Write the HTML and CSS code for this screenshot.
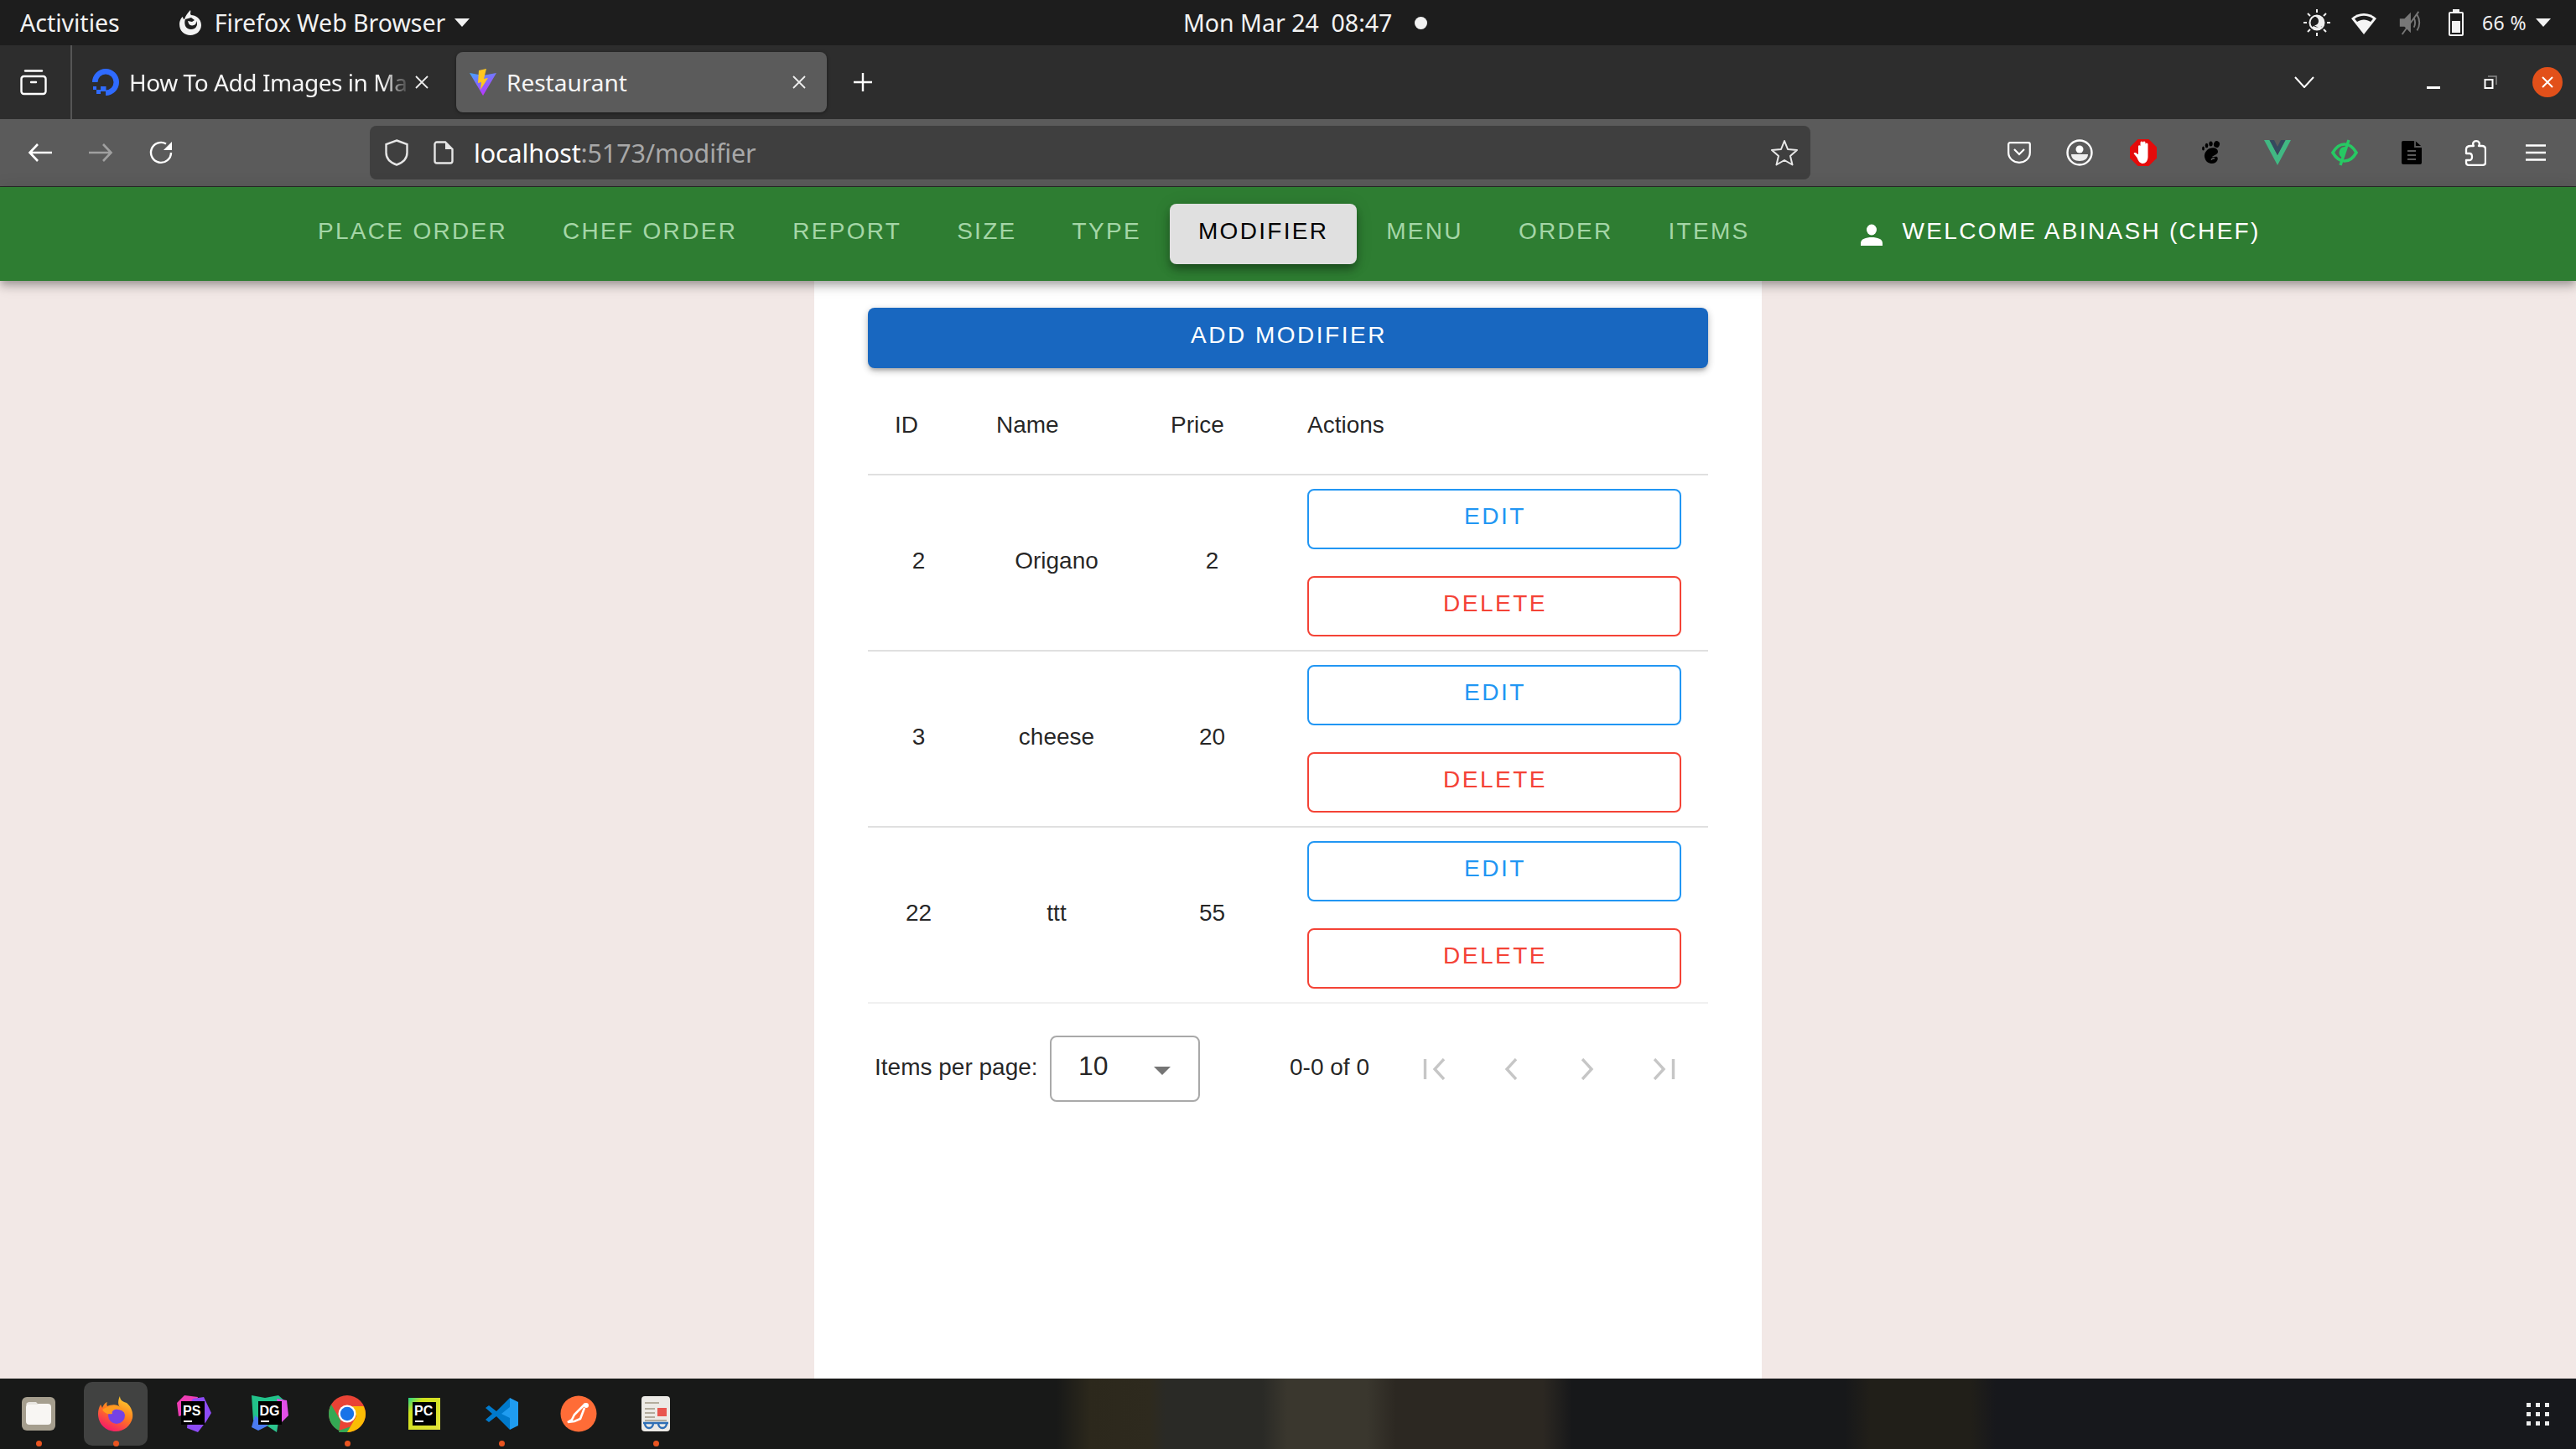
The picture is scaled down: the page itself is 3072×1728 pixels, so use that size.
FILE: index.html
```html
<!DOCTYPE html>
<html lang="en">
<head>
<meta charset="utf-8">
<title>Restaurant</title>
<link rel="stylesheet" href="styles.css">
</head>
<body>
<div class="desktop">
  <header class="topbar">
    <div class="top-left">
      <span class="activities">Activities</span>
      <span class="appmenu">
        <svg class="ff-mono" viewBox="0 0 30 32"><path fill="#f2f2f2" d="M15 1c1 3-1 4 1 6 5 0 12 4 12 12 0 7-6 12-13 12S2 26 2 18c0-4 2-8 4-9 0 2 1 3 2 3 1-4 4-8 7-11z"/><path fill="#1d1d1d" d="M9 12l7-2 4 3-3 2-5-1 1 3c1 3 6 3 8 1 1-1 1-3 1-4 2 3 1 7-2 9-4 2-9 1-11-3-1-3-1-6 0-8z"/></svg>
        <span class="appname">Firefox Web Browser</span>
        <span class="caret"></span>
      </span>
    </div>
    <div class="clock"><span>Mon Mar 24&nbsp; 08:47</span><span class="clock-dot"></span></div>
    <div class="tray">
      <svg class="tray-sun" viewBox="0 0 32 32"><g stroke="#eee" stroke-width="2" fill="none"><path d="M16 0v4M16 28v4M0 16h4M28 16h4M5 5l3 3M24 24l3 3M5 27l3-3M24 8l3-3"/><circle cx="16" cy="16" r="8.5"/></g><path fill="#eee" d="M12 8a9 9 0 0 1 12 11c-3 3-8 3-11 0 3 0 5-2 5-5s-2-5-6-6z"/><path fill="#eee" d="M10 22a9 9 0 0 0 12 0l-2-2a7 7 0 0 1-8 0z"/></svg>
      <svg class="tray-wifi" viewBox="0 0 32 32"><path fill="#f4f4f4" d="M16 30 1 11C9 3 23 3 31 11z"/><path fill="#1d1d1d" d="M5 11.500c6-5 16-5 22 0l-3 3.500c-5-3.500-11-3.500-16 0z"/></svg>
      <svg class="tray-vol" viewBox="0 0 32 32"><path fill="#777" d="M3 11h6l8-8v26l-8-8H3z"/><path fill="none" stroke="#777" stroke-width="2" d="M21 10c2 4 2 8 0 12M25 6c4 6 4 14 0 20M27 2 6 31"/></svg>
      <svg class="tray-bat" viewBox="0 0 20 32"><path fill="none" stroke="#f2f2f2" stroke-width="2" d="M3 4h14a1 1 0 0 1 1 1v25a1 1 0 0 1-1 1H3a1 1 0 0 1-1-1V5a1 1 0 0 1 1-1z"/><path fill="#f2f2f2" d="M6 0h8v4H6zM5 14h10v14H5z"/></svg>
      <span class="bat-text">66 %</span>
      <span class="caret"></span>
    </div>
  </header>

  <div class="tabbar">
    <div class="tab-lead">
      <svg class="ic-tabs" viewBox="0 0 32 32"><g fill="none" stroke="#fff" stroke-width="2.400" stroke-linecap="round"><rect x="1.500" y="9" width="29" height="21" rx="3"/><path d="M6 2.500h20"/><path d="M13 16h6"/></g></svg>
    </div>
    <div class="tab">
      <svg class="favicon" viewBox="0 0 32 32"><path fill="#2f6bff" d="M16 32v-6.500a9.500 9.500 0 1 0-9.500-9.500H0a16 16 0 1 1 16 16z"/><path fill="#2f6bff" d="M10 21h6.500v6H10zM5 25h5v5H5zM1 21h4v4H1z"/></svg>
      <span class="tab-title tab-fade">How To Add Images in Ma</span>
      <svg class="tab-close" viewBox="0 0 16 16"><path stroke="#eee" stroke-width="1.800" d="M1 1l14 14M15 1 1 15"/></svg>
    </div>
    <div class="tab tab-active">
      <svg class="favicon" viewBox="0 0 32 32"><defs><linearGradient id="vp" x1="0" y1="0" x2="0.500" y2="1"><stop offset="0" stop-color="#41a6ff"/><stop offset="1" stop-color="#bd34fe"/></linearGradient></defs><path fill="url(#vp)" d="M0 5l16 3 16-3-16 27z"/><path fill="#ffc61f" d="M20 0 11 2 10 17l4-1-1 9 9-14-5 1z"/></svg>
      <span class="tab-title">Restaurant</span>
      <svg class="tab-close" viewBox="0 0 16 16"><path stroke="#eee" stroke-width="1.800" d="M1 1l14 14M15 1 1 15"/></svg>
    </div>
    <span class="newtab"><svg class="ic-plus" viewBox="0 0 24 24"><path stroke="#fff" stroke-width="2.400" d="M12 1v22M1 12h22"/></svg></span>
    <span class="tabbar-space"></span>
    <svg class="ic-chev" viewBox="0 0 24 14"><path fill="none" stroke="#fff" stroke-width="2" d="M1 1l11 12L23 1"/></svg>
    <span class="win-min"></span>
    <svg class="win-restore" viewBox="0 0 16 16"><path fill="none" stroke="#8a8a8a" stroke-width="1.500" d="M5 1h10v10"/><rect x="1.500" y="5" width="9" height="10" fill="#2d2d2d" stroke="#fff" stroke-width="2"/></svg>
    <span class="win-close"><svg class="win-x" viewBox="0 0 14 14"><path stroke="#fff" stroke-width="2" d="M1 1l12 12M13 1 1 13"/></svg></span>
  </div>

  <div class="toolbar">
    <span class="slot"><svg class="ic-22" viewBox="0 0 30 24"><path fill="none" stroke="#fff" stroke-width="2.600" d="M29 12H3M12 2 2.500 12 12 22"/></svg></span>
    <span class="slot"><svg class="ic-22" viewBox="0 0 30 24"><path fill="none" stroke="#a0a0a0" stroke-width="2.600" d="M1 12h26M18 2l9.500 10L18 22"/></svg></span>
    <span class="slot"><svg class="ic-28" viewBox="0 0 28 28"><path fill="none" stroke="#fff" stroke-width="2.400" d="M26 14A12 12 0 1 1 20 3.500"/><path fill="#fff" d="M27 1v10H17z"/></svg></span>
    <div class="urlbar">
      <svg class="ic-shield" viewBox="0 0 28 32"><path fill="none" stroke="#e6e6e6" stroke-width="2.400" d="M14 1.500 26.500 6v10c0 7-5 12-12.500 14.500C6.500 28 1.500 23 1.500 16V6z"/></svg>
      <svg class="ic-page" viewBox="0 0 24 28"><path fill="none" stroke="#e6e6e6" stroke-width="2.400" d="M4 1.500h10l8.500 8.500v14a2.500 2.500 0 0 1-2.500 2.500H4A2.500 2.500 0 0 1 1.500 24V4A2.500 2.500 0 0 1 4 1.500z"/><path fill="#e6e6e6" d="M14 1.500l8.500 8.500H14z"/></svg>
      <span class="url"><span class="url-host">localhost</span><span class="url-rest">:5173/modifier</span></span>
      <svg class="ic-star" viewBox="0 0 32 32"><path fill="none" stroke="#e8e8e8" stroke-width="2" stroke-linejoin="round" d="M16 2l4 10 11 1-8 7 2.500 10.500L16 25 6.500 30.500 9 20l-8-7 11-1z"/></svg>
    </div>
    <div class="exts">
      <span class="slot"><svg class="ic-pocket" viewBox="0 0 28 26"><path fill="none" stroke="#fff" stroke-width="2.200" d="M3 1.200h22A1.800 1.800 0 0 1 26.800 3v10c0 7-6 11.800-12.800 11.800S1.200 20 1.200 13V3A1.800 1.800 0 0 1 3 1.200z"/><path fill="none" stroke="#fff" stroke-width="2.200" d="M8 9l6 6 6-6"/></svg></span>
      <span class="slot"><svg class="ic-square" viewBox="0 0 32 32"><circle cx="16" cy="16" r="14.500" fill="none" stroke="#fff" stroke-width="2.400"/><circle cx="16" cy="12" r="4.500" fill="#fff"/><path fill="#fff" d="M6 18h20c0 5-4 8-10 8S6 23 6 18z" opacity=".9"/></svg></span>
      <span class="slot slot-w"><svg class="ic-square" viewBox="0 0 32 32"><path fill="#e40b0b" d="M9.500 0h13L32 9.500v13L22.500 32h-13L0 22.500v-13z"/><path fill="#fff" d="M10 18V8a1.500 1.500 0 0 1 2.500 0V4a1.500 1.500 0 0 1 3 0 1.500 1.500 0 0 1 3 0V6a1.500 1.500 0 0 1 3 0v15c0 5-3 8-6 8s-5-2-7-7l-4-5c1-2 3-1 5 1z"/></svg></span>
      <span class="slot slot-w"><svg class="ic-gnome" viewBox="0 0 24 28"><g fill="#000"><ellipse cx="19.500" cy="4" rx="3.500" ry="4" transform="rotate(15 19.500 4)"/><ellipse cx="12.500" cy="3.500" rx="2.200" ry="3"/><ellipse cx="7.500" cy="5.500" rx="1.800" ry="2.800"/><ellipse cx="3.500" cy="9" rx="1.400" ry="2.500"/><path d="M11 9c5-2 10 0 10 4 0 3-5 4-7 6 2 1 4-1 6 0 2 2 0 8-6 8-4 0-8-2-9-8-.6-4 2-8 6-10z"/></g><path fill="none" stroke="#5b5b5b" stroke-width="1.600" d="M17 21c-2-.500-4 .500-3.500 2"/></svg></span>
      <span class="slot slot-w"><svg class="ic-vue" viewBox="0 2 32 30"><path fill="#41b883" d="M0 2h6.500L16 20 25.500 2H32L16 32z"/><path fill="#35495e" d="M6.500 2H12l4 8 4-8h5.500L16 20z"/></svg></span>
      <span class="slot slot-w"><svg class="ic-square" viewBox="0 0 32 32"><path fill="none" stroke="#27c963" stroke-width="3.600" d="M2 16C6 9 10 6 16 6s10 3 14 10c-4 7-8 10-14 10S6 23 2 16z"/><path fill="#27c963" d="M16 9a7 7 0 0 0-3 13l5-13z"/><path stroke="#27c963" stroke-width="3.500" d="M21 1 11 31"/></svg></span>
      <span class="slot slot-w"><svg class="ic-doc" viewBox="0 0 24 28"><path fill="#000" d="M2 0h14l8 7v19a2 2 0 0 1-2 2H2a2 2 0 0 1-2-2V2a2 2 0 0 1 2-2z"/><path stroke="#5b5b5b" stroke-width="1.800" d="M16 0v7h8M7 12h10M7 17h10M7 22h10"/></svg></span>
      <span class="slot"><svg class="ic-puzzle" viewBox="0 0 26 31"><path fill="none" stroke="#fff" stroke-width="2.300" stroke-linejoin="round" d="M8 7h3c-2-3.500 0-5.800 3-5.800s5 2.300 3 5.800h4c3 0 4 1 4 4v16c0 2-1 2.800-3 2.800H5c-2 0-3-.8-3-2.800v-3h4c4 0 4-8 0-8H2v-5c0-3 3-4 6-4z"/></svg></span>
      <span class="slot"><svg class="ic-menu" viewBox="0 0 24 20"><path stroke="#fff" stroke-width="2.500" d="M0 1.500h24M0 10h24M0 18.500h24"/></svg></span>
    </div>
  </div>

  <nav class="appnav">
    <a class="nav-btn">PLACE ORDER</a>
    <a class="nav-btn">CHEF ORDER</a>
    <a class="nav-btn">REPORT</a>
    <a class="nav-btn">SIZE</a>
    <a class="nav-btn">TYPE</a>
    <a class="nav-btn nav-active">MODIFIER</a>
    <a class="nav-btn">MENU</a>
    <a class="nav-btn">ORDER</a>
    <a class="nav-btn">ITEMS</a>
    <div class="welcome">
      <svg class="ic-person" viewBox="0 0 26 26"><ellipse cx="13" cy="7" rx="6" ry="6.500" fill="#fff"/><path fill="#fff" d="M0 26v-3c0-5 6-7 13-7s13 2 13 7v3z"/></svg>
      <span>WELCOME ABINASH (CHEF)</span>
    </div>
  </nav>

  <main class="page">
    <section class="sheet">
      <button class="add-btn">ADD MODIFIER</button>
      <table class="grid">
        <thead>
          <tr>
            <th class="col-id">ID</th>
            <th class="col-name">Name</th>
            <th class="col-price">Price</th>
            <th class="col-actions">Actions</th>
          </tr>
        </thead>
        <tbody>
          <tr>
            <td>2</td><td>Origano</td><td>2</td>
            <td class="cell-actions"><button class="line-btn line-edit">EDIT</button><button class="line-btn line-del">DELETE</button></td>
          </tr>
          <tr>
            <td>3</td><td>cheese</td><td>20</td>
            <td class="cell-actions"><button class="line-btn line-edit">EDIT</button><button class="line-btn line-del">DELETE</button></td>
          </tr>
          <tr class="row-last">
            <td>22</td><td>ttt</td><td>55</td>
            <td class="cell-actions"><button class="line-btn line-edit">EDIT</button><button class="line-btn line-del">DELETE</button></td>
          </tr>
        </tbody>
      </table>
      <div class="pager">
        <span class="pager-label">Items per page:</span>
        <div class="pager-select"><span class="pager-val">10</span><span class="pager-caret"></span></div>
        <span class="pager-range">0-0 of 0</span>
        <div class="pager-icons">
          <span class="pg"><svg class="pg-ic" viewBox="0 0 28 26"><path fill="none" stroke="#c6c6c6" stroke-width="3.400" d="M2.500 1v24M25 1 14 13l11 12"/></svg></span>
          <span class="pg"><svg class="pg-ic" viewBox="0 0 28 26"><path fill="none" stroke="#c6c6c6" stroke-width="3.400" d="M20 1 9 13l11 12"/></svg></span>
          <span class="pg"><svg class="pg-ic" viewBox="0 0 28 26"><path fill="none" stroke="#c6c6c6" stroke-width="3.400" d="M8 1l11 12L8 25"/></svg></span>
          <span class="pg"><svg class="pg-ic" viewBox="0 0 28 26"><path fill="none" stroke="#c6c6c6" stroke-width="3.400" d="M25.500 1v24M3 1l11 12L3 25"/></svg></span>
        </div>
      </div>
    </section>
  </main>

  <footer class="dock">
    <span class="dock-item has-dot"><svg class="dock-ic" viewBox="0 0 44 44"><rect x="2" y="2" width="40" height="40" rx="6" fill="#a59e8e"/><rect x="7" y="10" width="30" height="25" rx="4" fill="#f8f6f3"/><path fill="#e9e6e1" d="M7 12c0-3 2-4 4-4h8l3 3H7z"/></svg></span>
    <span class="dock-item dock-current has-dot"><svg class="dock-ic" viewBox="0 0 44 44"><defs><linearGradient id="ffa" x1="0.800" y1="0" x2="0.300" y2="1"><stop offset="0" stop-color="#ffd52f"/><stop offset=".5" stop-color="#ff7a1f"/><stop offset="1" stop-color="#f5156c"/></linearGradient></defs><path fill="url(#ffa)" d="M27 1c0 5 4 7 8 8 6 5 8 12 7 18-2 9-10 16-20 16C10 43 1 34 1 22c0-4 1-8 3-11l2 4c1-3 3-6 6-7-1 2-1 3 0 5 4-2 12-3 15 1-3-3-2-9 0-13z"/><circle cx="23" cy="24" r="10" fill="#7542e5"/><path fill="#ff9a1f" d="M6 17c5-4 12-5 17-4 6 1 10 5 11 10-3-5-8-7-13-6-3 1-4 3-3 5-6 1-10-1-12-5z"/></svg></span>
    <span class="dock-item"><svg class="dock-ic" viewBox="0 0 44 44"><path fill="#ee3db4" d="M3 9 12 0l16 2-6 18-17 5z"/><path fill="#8d4bf5" d="M22 4 35 2l9 19-6 10-10 13-13-5 3-28z"/><rect x="8" y="7" width="28" height="28" fill="#000"/><text class="jb-text" x="10" y="24">PS</text><rect x="11" y="30" width="10" height="2" fill="#fff"/></svg></span>
    <span class="dock-item"><svg class="dock-ic" viewBox="0 0 44 44"><path fill="#22c28a" d="M0 0 16 3 32 0l8 7L28 16 2 30z"/><path fill="#e24fe8" d="M30 4l12 2 2 18-8 8z"/><path fill="#4a7bf2" d="M4 24 20 36 8 42 0 38z"/><path fill="#2cc48e" d="M18 36l14-4-2 12z"/><rect x="8" y="7" width="28" height="28" fill="#000"/><text class="jb-text" x="9.500" y="24">DG</text><rect x="11" y="30" width="10" height="2" fill="#fff"/></svg></span>
    <span class="dock-item has-dot"><svg class="dock-ic" viewBox="0 0 44 44"><circle cx="22" cy="22" r="22" fill="#ea4335"/><path fill="#34a853" d="M3 11 14 30l-2 14H22l8-8L12 42C4 38 0 30 0 22c0-4 1-8 3-11z"/><path fill="#fbbc04" d="M22 13h19.500C43 16 44 19 44 22c0 12-10 22-22 22l11-19z"/><circle cx="22" cy="22" r="10.500" fill="#fff"/><circle cx="22" cy="22" r="8.200" fill="#1a73e8"/></svg></span>
    <span class="dock-item"><svg class="dock-ic" viewBox="0 0 44 44"><defs><linearGradient id="pcg" x1="0" y1="0" x2="1" y2="1"><stop offset="0" stop-color="#21d789"/><stop offset=".25" stop-color="#cfe11c"/><stop offset="1" stop-color="#e5e33b"/></linearGradient></defs><rect x="3" y="3" width="38" height="38" fill="url(#pcg)"/><rect x="8" y="8" width="28" height="28" fill="#000"/><text class="jb-text" x="10" y="24">PC</text><rect x="11" y="30" width="10" height="2" fill="#fff"/></svg></span>
    <span class="dock-item has-dot"><svg class="dock-ic" viewBox="0 0 44 44"><path fill="#007acc" d="M32 3 16 19 7 12l-4 3 8 7-8 7 4 3 9-7 16 16z"/><path fill="#1f9cf0" d="M32 3l10 5v28l-10 5V27L22 22l10-8z"/></svg></span>
    <span class="dock-item"><svg class="dock-ic" viewBox="0 0 44 44"><circle cx="22" cy="22" r="21.500" fill="#ff6c37"/><path fill="none" stroke="#fff" stroke-width="2.600" d="M30 10 17 23l-3 6-5 3 8-1 7-3 5-13"/><circle cx="31" cy="12" r="3" fill="#fff"/></svg></span>
    <span class="dock-item has-dot"><svg class="dock-ic" viewBox="0 0 44 44"><rect x="5" y="1" width="34" height="42" rx="4" fill="#eceae6"/><path stroke="#b3ac9d" stroke-width="2" d="M9 9h17M9 16h12M9 21h12M9 26h12M9 30h26"/><rect x="24" y="15" width="11" height="10" fill="#e8564f"/><path fill="none" stroke="#2f6fb5" stroke-width="2.400" d="M7 33h30M9 33c0 8 10 8 10 0M25 33c0 8 10 8 10 0"/></svg></span>
    <span class="dock-space"></span>
    <span class="dock-grid"><i></i><i></i><i></i><i></i><i></i><i></i><i></i><i></i><i></i></span>
  </footer>
</div>
</body>
</html>
```

FILE: styles.css
```css
* { box-sizing: border-box; }
html, body { margin: 0; padding: 0; }
body { font-family: "Liberation Sans", Arial, sans-serif; color: rgba(0,0,0,.87); }
svg { display: block; flex: none; }
.desktop { width: 3072px; height: 1728px; display: flex; flex-direction: column; overflow: hidden; }

/* GNOME top bar */
.topbar { height: 54px; background: #1d1d1d; display: flex; align-items: center; justify-content: space-between; padding: 0 30px 0 24px; color: #f2f2f2; font-family: "Noto Sans", sans-serif; font-size: 28.500px; position: relative; flex: none; }
.top-left { display: flex; align-items: center; }
.appmenu { display: flex; align-items: center; margin-left: 69px; }
.ff-mono { width: 30px; height: 32px; }
.appname { margin-left: 14px; }
.caret { width: 0; height: 0; border-left: 9.500px solid transparent; border-right: 9.500px solid transparent; border-top: 10px solid #f2f2f2; margin-left: 11px; }
.clock { position: absolute; left: 1411px; top: 0; height: 54px; display: flex; align-items: center; }
.clock-dot { width: 15px; height: 15px; border-radius: 50%; background: #f2f2f2; margin-left: 27px; }
.tray { display: flex; align-items: center; }
.tray-sun { width: 32px; height: 32px; margin-right: 24px; }
.tray-wifi { width: 32px; height: 32px; margin-right: 24px; }
.tray-vol { width: 30px; height: 32px; margin-right: 30px; }
.tray-bat { width: 20px; height: 32px; margin-right: 17px; }
.bat-text { font-size: 23px; margin-left: 4px; letter-spacing: .4px; }

/* Browser tabs */
.tabbar { height: 88px; background: #2d2d2d; display: flex; align-items: center; color: #f5f5f5; font-family: "Noto Sans", sans-serif; font-size: 28px; flex: none; }
.tab-lead { width: 86px; height: 88px; border-right: 2px solid #555; display: flex; align-items: center; justify-content: center; padding-right: 4px; }
.ic-tabs { width: 32px; height: 32px; }
.tab { width: 442px; height: 72px; border-radius: 8px; display: flex; align-items: center; padding-left: 16px; margin-left: 8px; position: relative; }
.tab-active { background: #5b5b5b; box-shadow: 0 1px 4px rgba(0,0,0,.4); }
.favicon { width: 32px; height: 32px; }
.tab-title { margin-left: 12px; width: 336px; white-space: nowrap; }
.tab-fade { letter-spacing: -.45px; -webkit-mask-image: linear-gradient(to right, #000 90%, transparent); mask-image: linear-gradient(to right, #000 90%, transparent); }
.tab-close { width: 16px; height: 16px; margin-left: 5px; }
.newtab { margin-left: 31px; }
.ic-plus { width: 24px; height: 24px; }
.tabbar-space { flex: 1; }
.ic-chev { width: 24px; height: 14px; }
.win-min { width: 16px; height: 3px; background: #fff; margin-left: 134px; margin-top: 12px; }
.win-restore { width: 16px; height: 16px; margin-left: 52px; }
.win-close { width: 36px; height: 36px; border-radius: 50%; background: #e2501a; margin-left: 42px; margin-right: 16px; display: flex; align-items: center; justify-content: center; }
.win-x { width: 14px; height: 14px; }

/* Browser toolbar */
.toolbar { height: 81px; background: #5b5b5b; border-bottom: 1px solid #2a2a2a; display: flex; align-items: center; padding-left: 12px; flex: none; }
.slot { width: 72px; display: flex; align-items: center; justify-content: center; flex: none; }
.slot-w { width: 80px; }
.ic-22 { width: 30px; height: 24px; }
.ic-28 { width: 28px; height: 28px; }
.ic-pocket { width: 28px; height: 26px; }
.ic-square { width: 32px; height: 32px; }
.ic-gnome { width: 24px; height: 28px; }
.ic-vue { width: 32px; height: 30px; }
.ic-doc { width: 24px; height: 28px; }
.ic-puzzle { width: 26px; height: 31px; }
.ic-menu { width: 24px; height: 20px; }
.urlbar { width: 1718px; height: 64px; margin-left: 213px; background: #3f3f3f; border-radius: 8px; display: flex; align-items: center; padding-left: 18px; padding-right: 15px; color: #fff; font-family: "Noto Sans", sans-serif; font-size: 30.500px; flex: none; }
.ic-shield { width: 28px; height: 32px; }
.ic-page { width: 24px; height: 28px; margin-left: 30px; }
.url { margin-left: 24px; flex: 1; letter-spacing: -.15px; }
.url-rest { color: #a8a8a8; }
.ic-star { width: 32px; height: 32px; }
.exts { display: flex; align-items: center; margin-left: 213px; }

/* App navigation */
.appnav { height: 112px; background: #2e7d32; display: flex; align-items: center; padding-left: 346px; flex: none; position: relative; z-index: 2; box-shadow: 0 4px 8px -2px rgba(0,0,0,.2), 0 8px 10px rgba(0,0,0,.14), 0 2px 20px rgba(0,0,0,.12); font-size: 28px; letter-spacing: 2.300px; }
.nav-btn { height: 72px; padding: 0 33px 6px; display: flex; align-items: center; color: #a5d6a7; border-radius: 8px; }
.nav-active { background: #e0e0e0; color: #000; padding: 0 34px 6px; margin: 0 2px 0 1px; box-shadow: 0 6px 10px -2px rgba(0,0,0,.25), 0 8px 12px rgba(0,0,0,.14), 0 2px 20px rgba(0,0,0,.12); }
.welcome { display: flex; align-items: center; color: #fff; height: 72px; padding-left: 99px; padding-bottom: 6px; }
.ic-person { width: 26px; height: 26px; margin-right: 24px; margin-top: 8px; }

/* Page */
.page { flex: 1; background: #f2e8e6; display: flex; justify-content: center; min-height: 0; }
.sheet { width: 1130px; background: #fff; padding: 32px 64px 0; font-size: 28px; }
.add-btn { display: block; width: 100%; height: 72px; background: #1867c0; color: #fff; border: 0; border-radius: 8px; font: inherit; letter-spacing: 2.500px; padding: 0 0 6px 2px; box-shadow: 0 4px 4px -2px rgba(0,0,0,.2), 0 4px 8px rgba(0,0,0,.14), 0 2px 10px rgba(0,0,0,.12); }
.grid { width: 100%; margin-top: 9px; table-layout: fixed; border-collapse: collapse; }
.grid th { height: 118px; padding: 0 0 0 32px; font-weight: 400; text-align: left; border-bottom: 2px solid #e0e0e0; }
.col-id { width: 121px; }
.col-name { width: 208px; }
.col-price { width: 163px; }
.grid td { padding: 0 0 4px; text-align: center; border-bottom: 2px solid #e0e0e0; }
.grid .row-last td { border-bottom-color: #f0f0f0; }
.grid .cell-actions { padding: 16px 32px; }
.line-btn { display: block; width: 100%; height: 72px; background: #fff; border: 2px solid; border-radius: 8px; font: inherit; letter-spacing: 2.500px; padding: 0 0 6px 2px; }
.line-edit { color: #2196f3; border-color: #2196f3; margin-bottom: 32px; }
.line-del { color: #f44336; border-color: #f44336; }

/* Pagination */
.pager { display: flex; align-items: center; padding: 38px 0 0 8px; }
.pager-label { width: 209px; margin-top: -4px; }
.pager-select { width: 179px; height: 79px; border: 2px solid #a9a9a9; border-radius: 8px; display: flex; align-items: center; padding: 0 0 0 32px; }
.pager-val { font-size: 32px; margin-top: -6px; width: 90px; }
.pager-caret { width: 0; height: 0; border-left: 10.500px solid transparent; border-right: 10.500px solid transparent; border-top: 10px solid #757575; margin-top: 4px; }
.pager-range { margin-left: 107px; width: 127px; margin-top: -4px; }
.pager-icons { display: flex; align-items: center; }
.pg { width: 91px; display: flex; justify-content: center; }
.pg-ic { width: 28px; height: 26px; }

/* Dock */
.dock { height: 84px; display: flex; align-items: center; flex: none; background: linear-gradient(to right, #181918 0, #181918 1260px, #2c281c 1300px, #2e2a1e 1371px, #2a2a26 1390px, #2a2a26 1505px, #3a372e 1535px, #3a372e 1630px, #2c2822 1665px, #2c2822 1840px, #17181a 1875px, #17181a 2200px, #211f19 2230px, #211f19 2350px, #17181c 2380px, #17181c 100%); }
.dock-item { width: 92px; height: 84px; display: flex; align-items: center; justify-content: center; position: relative; flex: none; }
.dock-ic { width: 44px; height: 44px; }
.dock-current::before { content: ""; position: absolute; left: 8px; right: 8px; top: 4px; bottom: 4px; background: rgba(255,255,255,.18); border-radius: 10px; }
.dock-current .dock-ic { position: relative; }
.has-dot::after { content: ""; position: absolute; left: 42.500px; bottom: 3.500px; width: 7px; height: 7px; border-radius: 50%; background: #e95420; }
.dock-space { flex: 1; }
.dock-grid { display: grid; grid-template-columns: repeat(3, 5px); gap: 6px; margin-right: 32px; }
.dock-grid i { height: 5px; background: #ececec; }
.jb-text { fill: #fff; font-family: "Liberation Sans", sans-serif; font-weight: 700; font-size: 16px; letter-spacing: 0; }
```
